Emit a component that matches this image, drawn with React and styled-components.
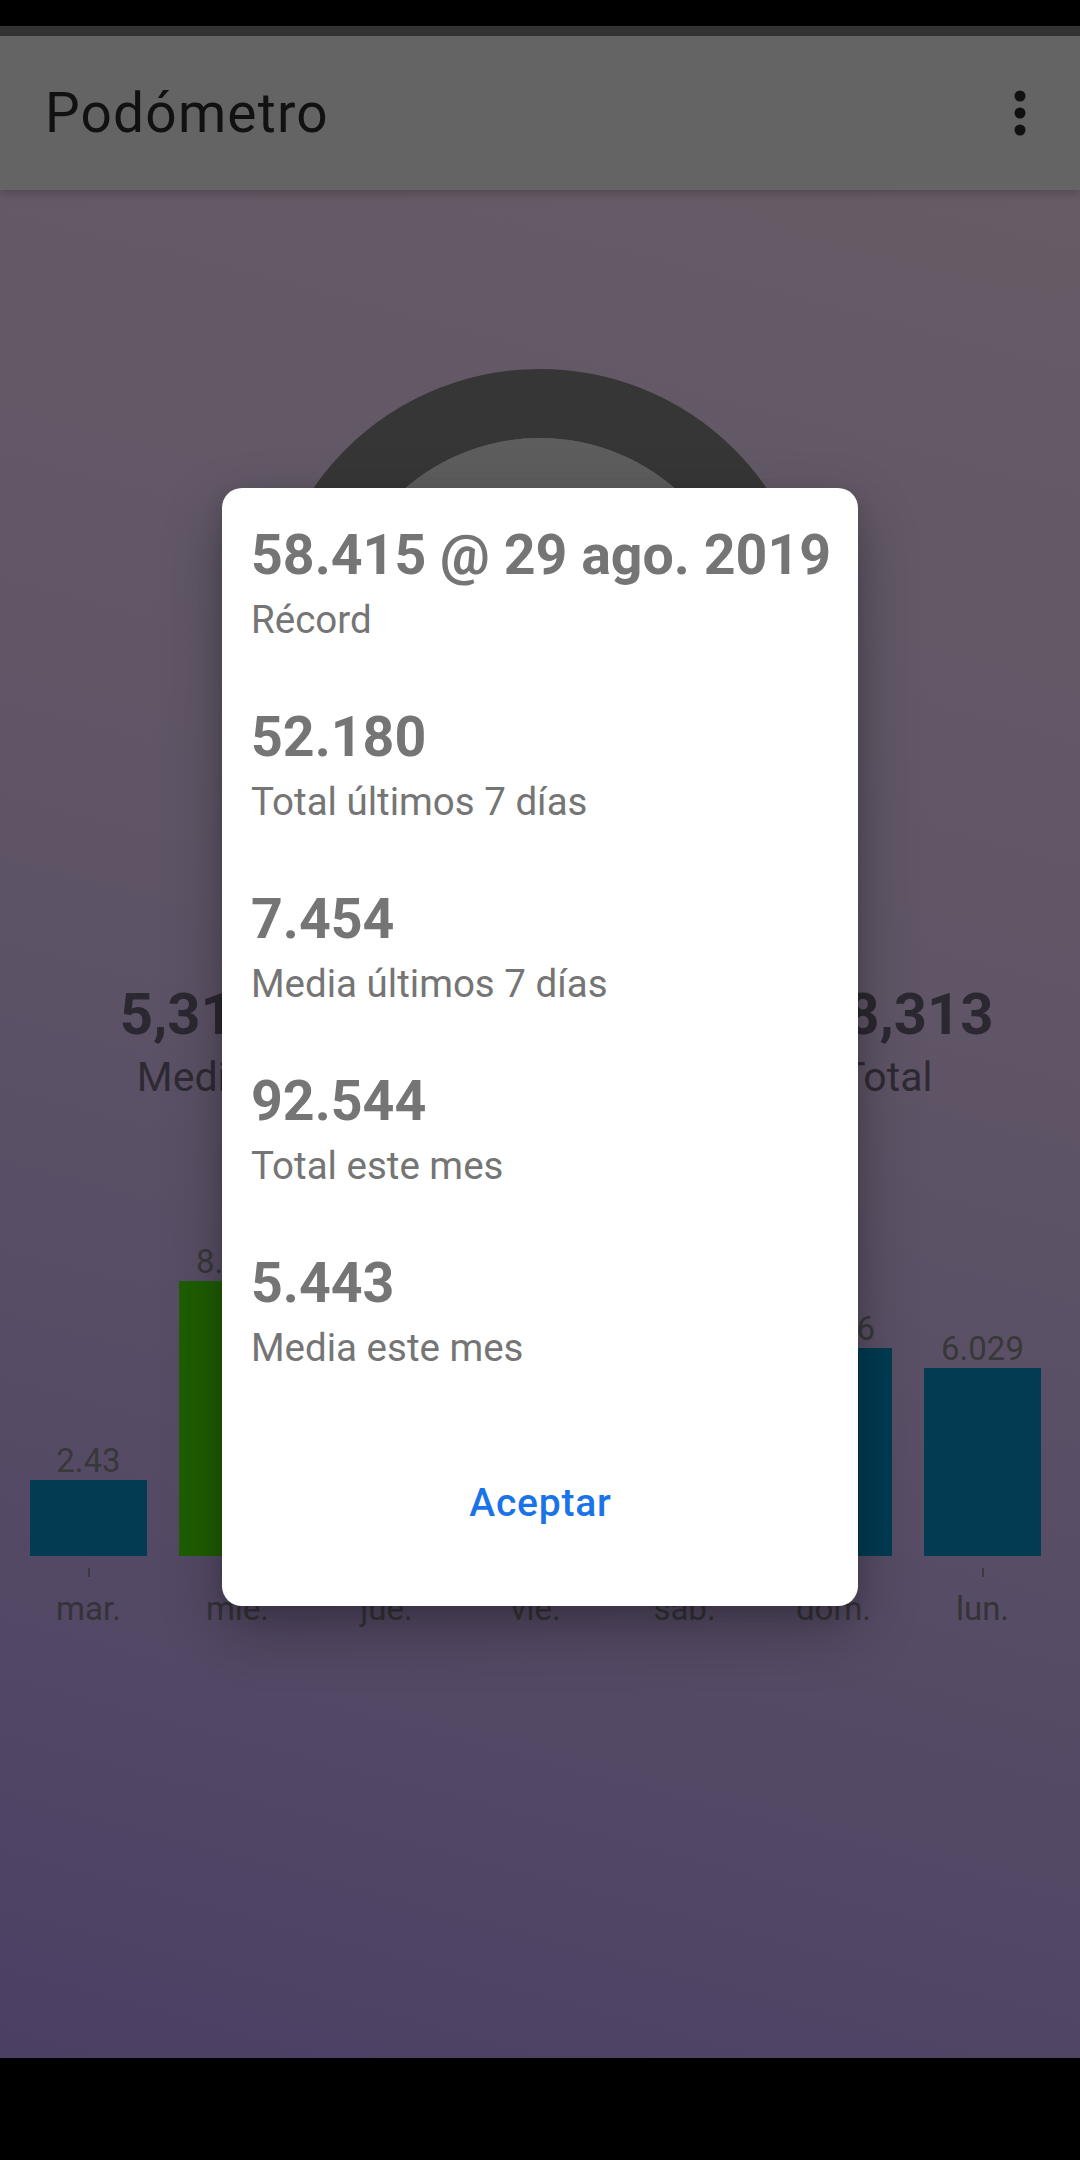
import React from 'react';
import styled, { createGlobalStyle } from 'styled-components';

const GlobalStyle = createGlobalStyle`
  html, body {
    margin: 0;
    padding: 0;
    background: #000;
  }
  body {
    font-family: Roboto, "Liberation Sans", sans-serif;
  }
  * {
    box-sizing: border-box;
  }
`;

const Screen = styled.div`
  width: 1080px;
  height: 2160px;
  display: flex;
  flex-direction: column;
  overflow: hidden;
  position: relative;
`;

const StatusBar = styled.div`
  height: 36px;
  flex: none;
  background: #000;
  border-bottom: 10px solid #333333;
`;

const AppBar = styled.header`
  height: 154px;
  flex: none;
  display: flex;
  align-items: center;
  justify-content: space-between;
  padding: 0 40px 0 45px;
  background: #646464;
  box-shadow: 0 4px 8px rgba(0, 0, 0, 0.18);
  position: relative;
  z-index: 1;
`;

const Title = styled.h1`
  margin: 0;
  font-family: Roboto, "Liberation Sans", sans-serif;
  font-weight: 400;
  font-size: 55px;
  letter-spacing: 1.2px;
  color: #111111;
`;

const MenuButton = styled.button`
  border: 0;
  background: none;
  padding: 0;
  width: 40px;
  height: 60px;
  display: flex;
  align-items: center;
  justify-content: center;
`;

const Content = styled.main`
  flex: 1;
  display: flex;
  flex-direction: column;
  align-items: center;
  padding-top: 179px;
  background: linear-gradient(195deg, #665c66 0%, #5f5566 40%, #564b65 70%, #4b4064 100%);
`;

const Gauge = styled.svg`
  display: block;
  flex: none;
`;

const StatsRow = styled.div`
  width: 100%;
  margin-top: 60px;
  padding: 0 20px;
  display: grid;
  grid-template-columns: repeat(3, 1fr);
`;

const Stat = styled.div`
  display: flex;
  flex-direction: column;
  align-items: center;
`;

const StatValue = styled.div`
  font-size: 58px;
  line-height: 70px;
  font-weight: 700;
  color: #2c2832;
`;

const StatLabel = styled.div`
  margin-top: 4px;
  font-size: 41px;
  line-height: 48px;
  color: #2e2a34;
`;

const Chart = styled.div`
  width: 100%;
  height: 527px;
  padding-left: 30px;
  display: flex;
  align-items: flex-end;
  gap: 32px;
`;

const Day = styled.div`
  width: 117px;
  display: flex;
  flex-direction: column;
  align-items: center;
`;

const BarValue = styled.div`
  font-size: 33px;
  line-height: 39px;
  color: #383838;
  white-space: nowrap;
`;

const Bar = styled.div`
  width: 100%;
  background: ${(p) => (p.$goal ? '#1e5e00' : '#023b52')};
`;

const Tick = styled.div`
  width: 2px;
  height: 9px;
  margin-top: 12px;
  background: #3c3a40;
`;

const DayLabel = styled.div`
  margin-top: 12px;
  font-size: 33px;
  line-height: 39px;
  color: #353337;
`;

const NavBar = styled.div`
  height: 102px;
  flex: none;
  background: #000;
`;

const Scrim = styled.div`
  position: absolute;
  top: 36px;
  bottom: 102px;
  left: 0;
  right: 0;
  display: flex;
  align-items: center;
  justify-content: center;
  z-index: 2;
`;

const Dialog = styled.div`
  width: 636px;
  background: #ffffff;
  border-radius: 20px;
  padding: 36px 28px 80px 29px;
  display: flex;
  flex-direction: column;
  box-shadow: 0 24px 60px rgba(0, 0, 0, 0.28), 0 8px 20px rgba(0, 0, 0, 0.12);
`;

const Entry = styled.div`
  display: flex;
  flex-direction: column;
  & + & {
    margin-top: 64px;
  }
`;

const EntryValue = styled.div`
  font-size: 55.5px;
  line-height: 64px;
  font-weight: 700;
  color: #757575;
  white-space: nowrap;
`;

const EntryLabel = styled.div`
  margin-top: 9px;
  font-size: 38.5px;
  line-height: 45px;
  color: #757575;
`;

const Actions = styled.div`
  margin-top: 111px;
  display: flex;
  justify-content: center;
`;

const TextButton = styled.button`
  border: 0;
  background: none;
  padding: 0;
  font-family: Roboto, "Liberation Sans", sans-serif;
  font-size: 39px;
  line-height: 45px;
  font-weight: 500;
  letter-spacing: 0.8px;
  color: #1a73e8;
`;

const week = [
  { day: 'mar.', steps: 2430 },
  { day: 'mié.', steps: 8814 },
  { day: 'jue.', steps: 9120 },
  { day: 'vie.', steps: 10240 },
  { day: 'sáb.', steps: 8881 },
  { day: 'dom.', steps: 6666 },
  { day: 'lun.', steps: 6029 },
];

const summary = [
  { value: '58.415 @ 29 ago. 2019', label: 'Récord' },
  { value: '52.180', label: 'Total últimos 7 días' },
  { value: '7.454', label: 'Media últimos 7 días' },
  { value: '92.544', label: 'Total este mes' },
  { value: '5.443', label: 'Media este mes' },
];

const GOAL = 8000;
const PX_PER_STEP = 0.0312;

// 2430 -> "2.43", 6029 -> "6.029"
const shortSteps = (n) => String(n / 1000);

const Kebab = () => (
  <svg width="12" height="46" viewBox="0 0 12 46">
    <circle cx="6" cy="6" r="5.5" fill="#111" />
    <circle cx="6" cy="23" r="5.5" fill="#111" />
    <circle cx="6" cy="40" r="5.5" fill="#111" />
  </svg>
);

export default function App() {
  return (
    <Screen>
      <GlobalStyle />
      <StatusBar />
      <AppBar>
        <Title>Podómetro</Title>
        <MenuButton aria-label="Más opciones">
          <Kebab />
        </MenuButton>
      </AppBar>

      <Content>
        <Gauge width="550" height="550" viewBox="0 0 550 550">
          <circle cx="275" cy="275" r="240.5" fill="none" stroke="#363636" strokeWidth="69" />
          <circle cx="275" cy="275" r="206" fill="#5d5d5d" />
        </Gauge>

        <StatsRow>
          <Stat>
            <StatValue>5,314</StatValue>
            <StatLabel>Media</StatLabel>
          </Stat>
          <Stat>
            <StatValue>6,029</StatValue>
            <StatLabel>Hoy</StatLabel>
          </Stat>
          <Stat>
            <StatValue>158,313</StatValue>
            <StatLabel>Total</StatLabel>
          </Stat>
        </StatsRow>

        <Chart>
          {week.map((d) => (
            <Day key={d.day}>
              <BarValue>{shortSteps(d.steps)}</BarValue>
              <Bar $goal={d.steps >= GOAL} style={{ height: Math.round(d.steps * PX_PER_STEP) }} />
              <Tick />
              <DayLabel>{d.day}</DayLabel>
            </Day>
          ))}
        </Chart>
      </Content>

      <NavBar />

      <Scrim>
        <Dialog>
          {summary.map((s) => (
            <Entry key={s.label}>
              <EntryValue>{s.value}</EntryValue>
              <EntryLabel>{s.label}</EntryLabel>
            </Entry>
          ))}
          <Actions>
            <TextButton>Aceptar</TextButton>
          </Actions>
        </Dialog>
      </Scrim>
    </Screen>
  );
}
